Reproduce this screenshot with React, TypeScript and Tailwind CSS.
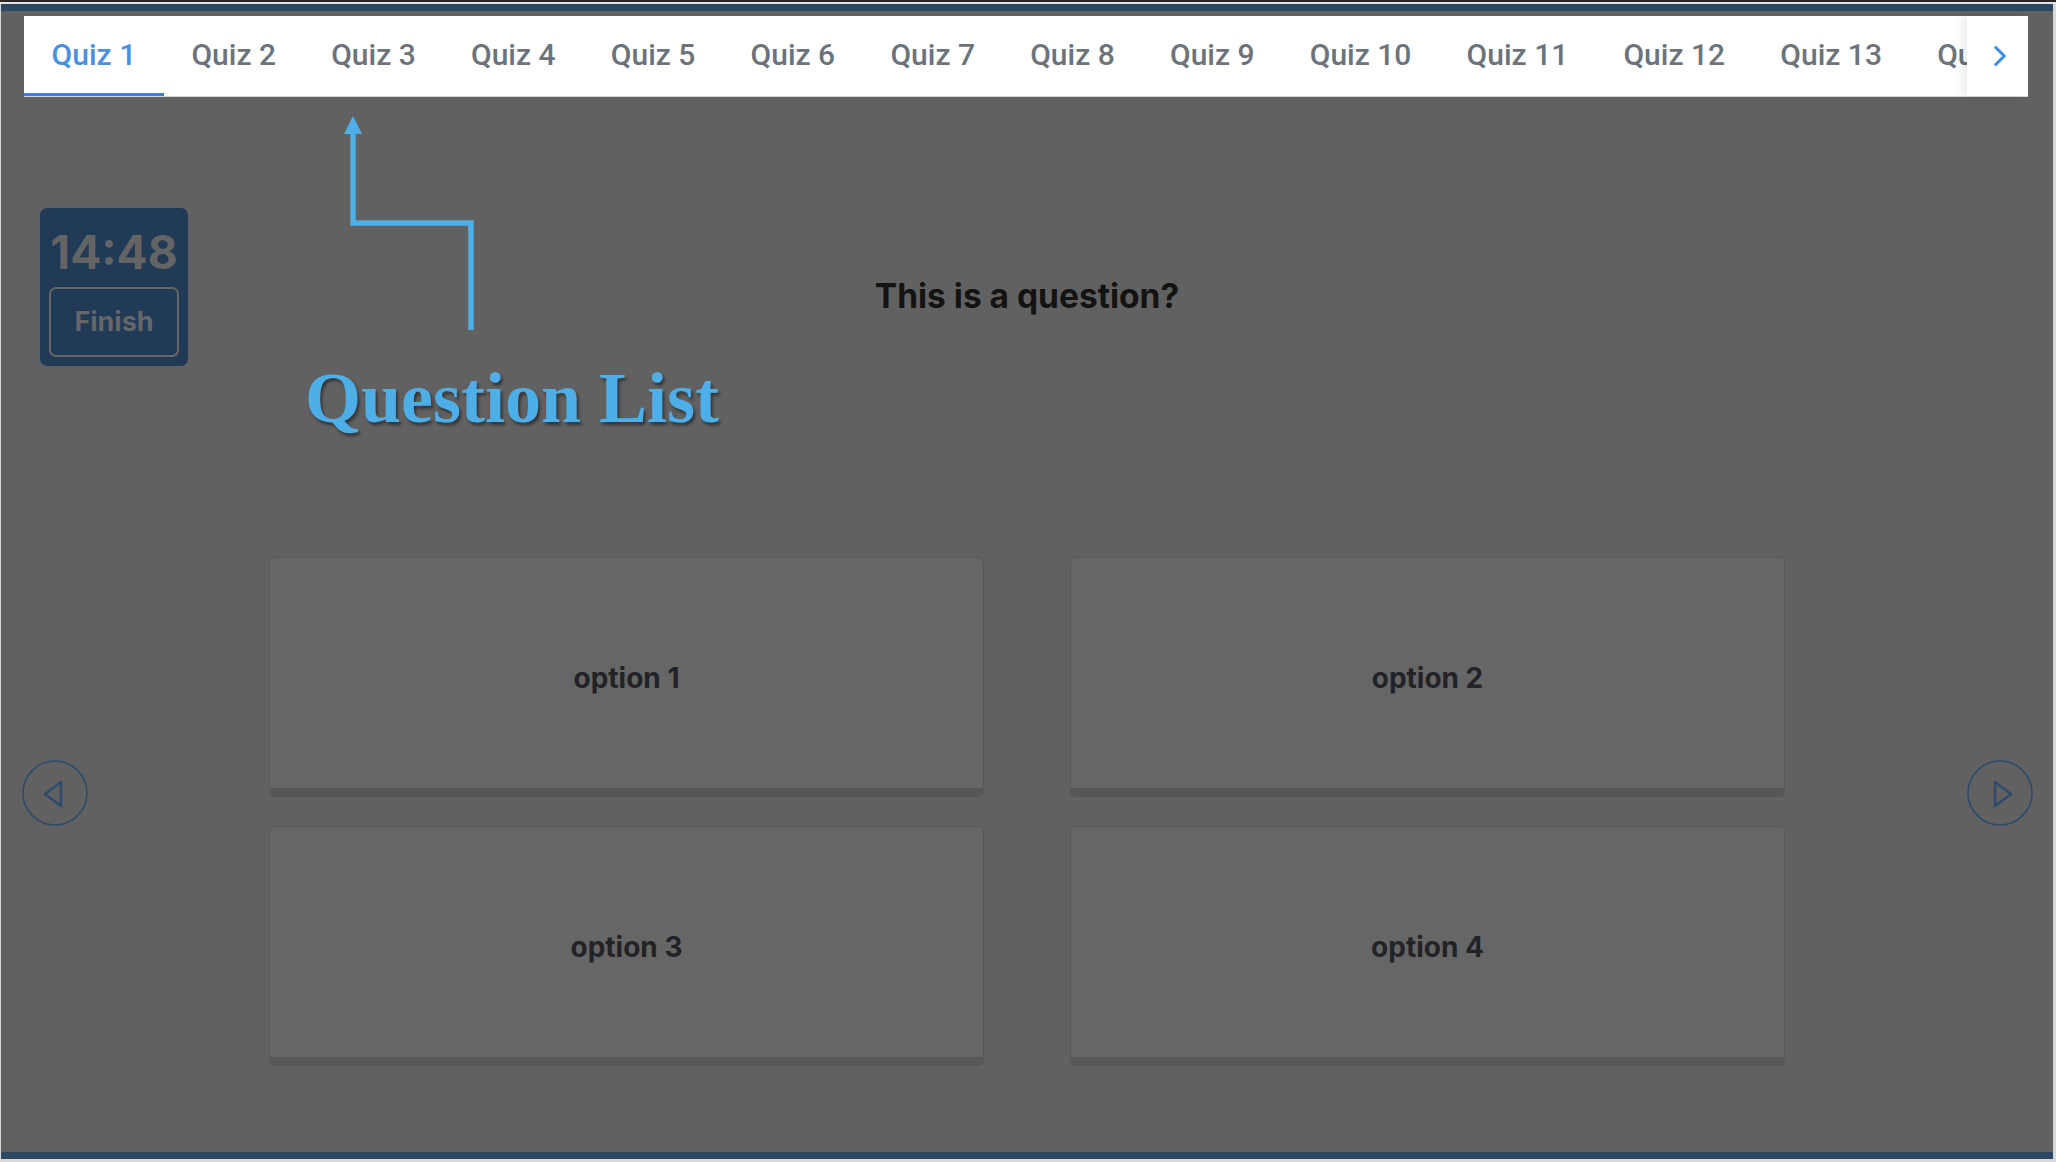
import { ChevronRight } from "lucide-react";

const QUIZZES = Array.from({ length: 15 }, (_, i) => `Quiz ${i + 1}`);
const OPTIONS = ["option 1", "option 2", "option 3", "option 4"];

function SideButton({ dir }: { dir: "left" | "right" }) {
  return (
    <svg width="66" height="66" viewBox="0 0 66 66" fill="none">
      <circle cx="33" cy="33" r="32" stroke="#2e4b6e" strokeWidth="1.6" />
      {dir === "left" ? (
        <path d="M39 22 L39 46 L23 34 Z" stroke="#2e4b6e" strokeWidth="2.6" strokeLinejoin="round" />
      ) : (
        <path d="M28 22 L28 46 L44 34 Z" stroke="#2e4b6e" strokeWidth="2.6" strokeLinejoin="round" />
      )}
    </svg>
  );
}

export default function App() {
  return (
    <div className="relative w-[2056px] h-[1162px] overflow-hidden bg-[#d9d9d9] font-['Inter',sans-serif]">
      <div className="h-[2px] bg-[#262626]" />
      <div className="h-[2px] bg-[#e4e4e4]" />

      <div className="ml-px mr-[3px] h-[1155px] flex flex-col">
        <div className="h-[7px] bg-[#2d4660]" />

        {/* ── main (dimmed by tutorial overlay) ─────────────── */}
        <main className="flex-1 bg-[#616161] flex flex-col">
          {/* tab bar */}
          <div className="mt-[5px] ml-[23px] w-[2004px] h-[81px] bg-white flex border-b border-[#d8d8d8]">
            <div className="flex-1 flex overflow-hidden">
              {QUIZZES.map((q, i) => (
                <div
                  key={q}
                  className={`shrink-0 h-full flex items-center px-[27.6px] font-['Roboto',sans-serif] text-[30px] font-medium whitespace-nowrap ${
                    i === 0 ? "text-[#4a90e2] border-b-[3px] border-[#3a80dc]" : "text-[#6c737b] border-b-[3px] border-transparent"
                  }`}
                >
                  {q}
                </div>
              ))}
            </div>
            <div className="w-[61px] h-full bg-white flex items-center justify-center pl-1 shadow-[-5px_0_7px_rgba(0,0,0,0.07)]">
              <ChevronRight size={34} strokeWidth={2.2} color="#3d8de6" />
            </div>
          </div>

          {/* question */}
          <h1 className="mt-[179px] text-center text-[33.5px] leading-[40px] font-bold text-[#131313]">
            This is a question?
          </h1>

          {/* options */}
          <div className="mt-[241px] mx-auto w-[1516px] grid grid-cols-2 gap-x-[86px] gap-y-[29px]">
            {OPTIONS.map((o) => (
              <div
                key={o}
                className="h-[240px] rounded-[5px] bg-[#666666] border border-[#595959] border-b-[9px] border-b-[#575757] flex items-center justify-center pt-[9px] text-[28px] font-bold text-[#222326]"
              >
                {o}
              </div>
            ))}
          </div>
        </main>

        <div className="h-[7px] bg-[#2d4864]" />
      </div>

      {/* ── timer widget ──────────────────────────────────── */}
      <div className="absolute left-[40px] top-[208px] w-[148px] h-[158px] rounded-[7px] bg-[#213a56] flex flex-col items-center pt-[20px] px-[9px]">
        <div className="text-[46px] leading-[48px] font-bold text-[#646464]">14:48</div>
        <div className="mt-[11px] w-full h-[70px] rounded-[7px] border-2 border-[#666666] flex items-center justify-center text-[27px] font-bold text-[#666666]">
          Finish
        </div>
      </div>

      {/* ── side navigation ───────────────────────────────── */}
      <div className="absolute left-[22px] top-[760px]">
        <SideButton dir="left" />
      </div>
      <div className="absolute left-[1967px] top-[760px]">
        <SideButton dir="right" />
      </div>

      {/* ── tutorial annotation ───────────────────────────── */}
      <svg className="absolute left-[330px] top-[100px]" width="160" height="240" viewBox="0 0 160 240" fill="none">
        <path d="M23 32 L23 123 L141 123 L141 230" stroke="#4eaee8" strokeWidth="5.5" strokeLinejoin="miter" />
        <path d="M14 34 L32 34 L23 16 Z" fill="#4eaee8" />
      </svg>
      <div className="absolute left-[305px] top-[362px] font-['Liberation_Serif',serif] text-[72px] leading-[72px] font-bold text-[#4eaee8] [text-shadow:2px_3px_3px_rgba(0,0,0,0.45)]">
        Question List
      </div>
    </div>
  );
}
